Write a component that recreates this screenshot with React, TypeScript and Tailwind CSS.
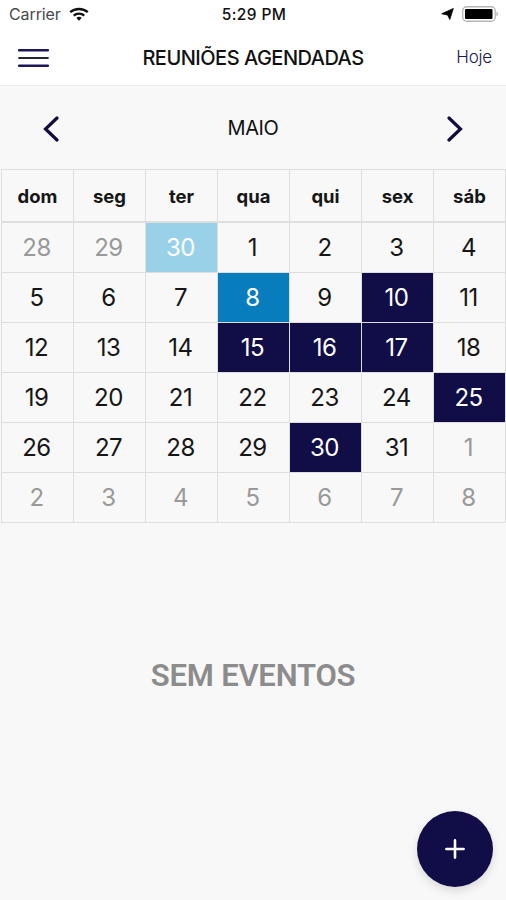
import { clsx } from 'clsx';

type DayKind = 'normal' | 'outside' | 'outsideToday' | 'selected' | 'event';

interface Day {
  label: number;
  kind: DayKind;
}

const weekDays = ['dom', 'seg', 'ter', 'qua', 'qui', 'sex', 'sáb'];
const eventDays = [10, 15, 16, 17, 25, 30];
const selectedDay = 8;

const buildDays = (): Day[] => {
  const previous: Day[] = [
    { label: 28, kind: 'outside' },
    { label: 29, kind: 'outside' },
    { label: 30, kind: 'outsideToday' },
  ];
  const current = Array.from({ length: 31 }, (_, i): Day => {
    const label = i + 1;
    if (label === selectedDay) return { label, kind: 'selected' };
    return { label, kind: eventDays.includes(label) ? 'event' : 'normal' };
  });
  const next = Array.from({ length: 8 }, (_, i): Day => ({ label: i + 1, kind: 'outside' }));
  return [...previous, ...current, ...next];
};

const days = buildDays();

const StatusBar = () => (
  <div className="grid h-[29px] grid-cols-3 items-center pl-[9px] pr-[7px]">
    <div className="flex items-center gap-2 pb-px">
      <span className="text-[16px] tracking-[-0.1px] text-[#4a4a4a]">Carrier</span>
      <svg width="20" height="15" viewBox="0 0 20 15" fill="none" stroke="#111" strokeWidth="2.3">
        <path d="M1.2 5.2C6 .9 14 .9 18.8 5.2" />
        <path d="M4.7 8.6C7.7 5.9 12.3 5.9 15.3 8.6" />
        <path d="M10 13.7l-2.7-2.8c1.5-1.4 3.9-1.4 5.4 0z" fill="#111" stroke="none" />
      </svg>
    </div>
    <span className="text-center text-[15.5px] font-medium tracking-[0.4px] text-[#111]">5:29 PM</span>
    <div className="flex items-center justify-end gap-[8px] pb-px">
      <svg width="13" height="12" viewBox="0 0 13 12" fill="#000">
        <path d="M12.3 0.5L8.8 11.5 6.6 7 0.7 5.8z" stroke="#000" strokeWidth="0.8" strokeLinejoin="round" />
      </svg>
      <svg width="37" height="16" viewBox="0 0 37 16">
        <rect x="0.75" y="0.75" width="32.5" height="14.5" rx="4" fill="#fff" stroke="#b5b5b5" strokeWidth="1.3" />
        <rect x="3" y="3" width="27.5" height="10" rx="1" fill="#000" />
        <path d="M34.5 5.8c1.8.6 1.8 3.8 0 4.4z" fill="#aaa" />
      </svg>
    </div>
  </div>
);

const Header = () => (
  <header className="grid h-[57px] grid-cols-[80px_1fr_80px] items-center border-b border-[#ececec] pt-[2px]">
    <button className="ml-[18px]" aria-label="Menu">
      <svg width="31" height="20" viewBox="0 0 31 20" strokeWidth="2.5" strokeLinecap="round">
        <path d="M1.2 2.2h28.6M1.2 17.8h28.6" stroke="#1b1559" />
        <path d="M1.2 10h28.6" stroke="#242433" strokeWidth="2.2" />
      </svg>
    </button>
    <h1 className="text-center text-[20px] font-medium tracking-[-0.5px] text-[#111]">REUNIÕES AGENDADAS</h1>
    <button className="pr-[14px] text-right text-[17px] font-light tracking-[-0.2px] text-[#1d1750]">Hoje</button>
  </header>
);

const Chevron = ({ flip = false }: { flip?: boolean }) => (
  <svg width="17" height="28" viewBox="0 0 17 28" fill="none" stroke="#120c40" strokeWidth="3.2" strokeLinecap="round" className={clsx(flip && 'rotate-180')}>
    <path d="M15 3L3.5 14 15 25" />
  </svg>
);

const MonthBar = () => (
  <div className="flex h-[83px] items-center justify-between px-[42px]">
    <button aria-label="Mês anterior" className="mt-[3px]"><Chevron /></button>
    <h2 className="mt-px text-[20px] tracking-[-0.4px] text-[#111]">MAIO</h2>
    <button aria-label="Próximo mês" className="mt-[3px]"><Chevron flip /></button>
  </div>
);

const DayCell = ({ label, kind }: Day) => (
  <div className="h-[50px] border-b border-r border-[#dedede]">
    <div
      className={clsx(
        'flex h-full items-center justify-center pr-[2px] text-[24px] tracking-[-0.5px]',
        kind === 'normal' && 'text-[#161616]',
        kind === 'outside' && 'text-[#999]',
        kind === 'outsideToday' && 'bg-[#99d1e8] text-white',
        kind === 'selected' && 'bg-[#087dbd] text-white',
        kind === 'event' && 'bg-[#110d46] text-white'
      )}
    >
      {label}
    </div>
  </div>
);

const Calendar = () => (
  <section className="ml-px w-[505px] border-l border-t border-[#dedede]">
    <div className="grid grid-cols-7 border-b-2 border-[#dedede]">
      {weekDays.map((name) => (
        <div key={name} className="flex h-[51px] items-center justify-center border-r border-[#dedede] pt-[3px] text-[18.5px] font-bold text-[#161616]">
          {name}
        </div>
      ))}
    </div>
    <div className="grid grid-cols-7">
      {days.map((day, index) => (
        <DayCell key={index} {...day} />
      ))}
    </div>
  </section>
);

const App = () => {
  return (
    <div className="flex h-[900px] w-[506px] flex-col overflow-hidden bg-[#f8f8f8] font-['Inter',sans-serif]">
      <div className="bg-white">
        <StatusBar />
        <Header />
      </div>
      <MonthBar />
      <Calendar />
      <p className="mt-[130px] text-center font-['Roboto',sans-serif] text-[31px] font-semibold leading-[46px] tracking-[-0.2px] text-[#8c8c8c]">
        SEM EVENTOS
      </p>
      <button
        aria-label="Adicionar"
        className="mb-[13px] mr-[13px] mt-auto flex size-[76px] items-center justify-center self-end rounded-full bg-[#110d46] shadow-[0_4px_10px_rgba(0,0,0,0.12)]"
      >
        <svg width="20" height="20" viewBox="0 0 20 20" stroke="#fff" strokeWidth="2.6" strokeLinecap="round">
          <path d="M10 1.4v17.2M1.4 10h17.2" />
        </svg>
      </button>
    </div>
  );
};

export default App;
